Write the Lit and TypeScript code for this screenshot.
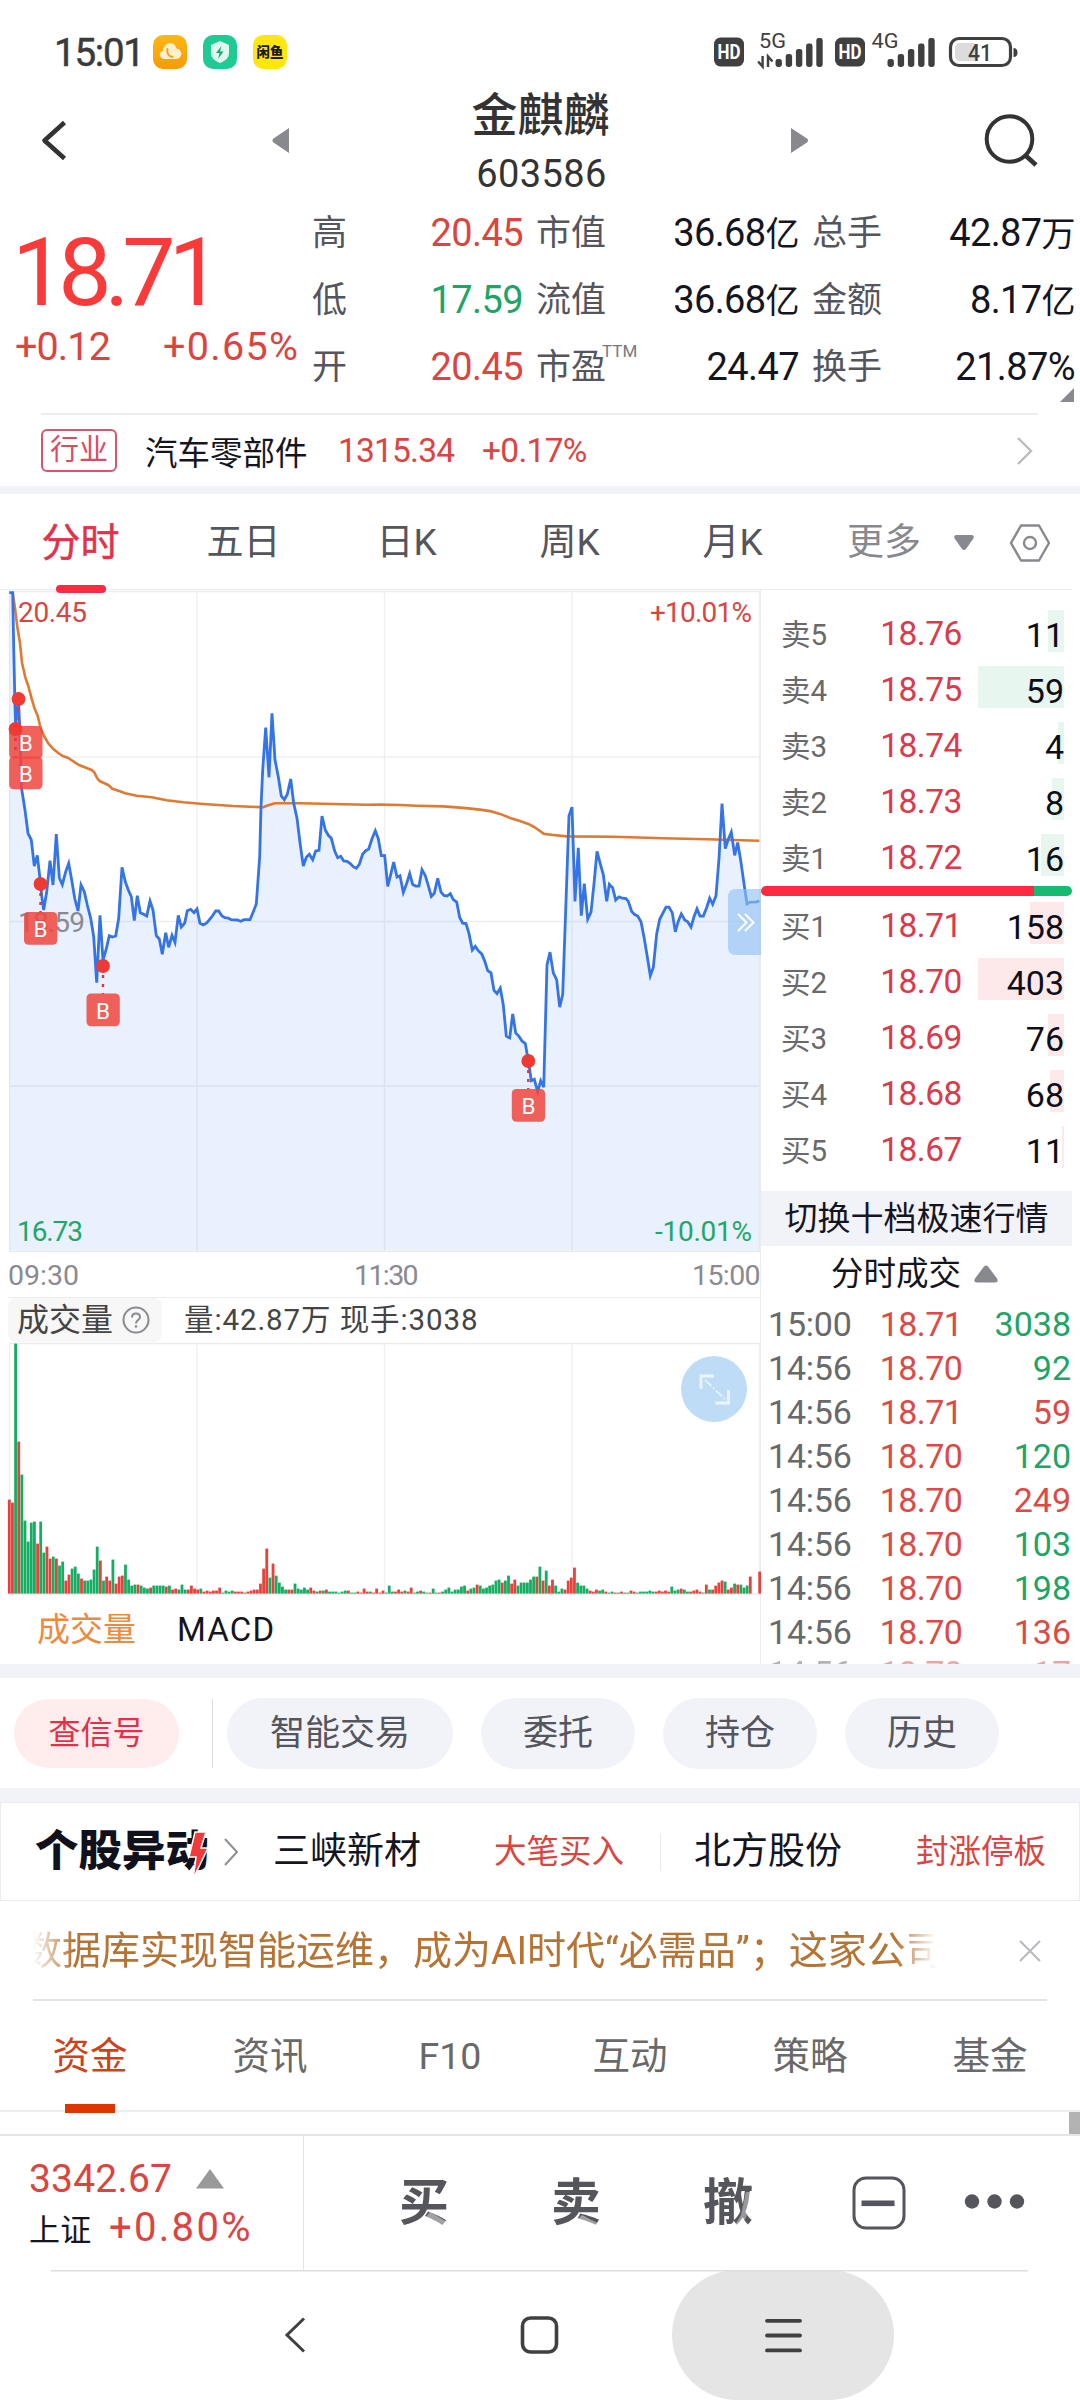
import { LitElement, html, svg, css } from "lit";
import { customElement } from "lit/decorators.js";
import { styleMap } from "lit/directives/style-map.js";

type Pt = [number, number];

/** Reads "x,y x,y ..." samples and maps them onto the page grid. */
const samples = (raw: string, ox: number, oy: number, sx: number, sy: number): Pt[] =>
  raw
    .trim()
    .split(/\s+/)
    .map((p) => {
      const [x, y] = p.split(",").map(Number);
      return [ox + x / sx, oy + y / sy] as Pt;
    });

const toPoints = (pts: Pt[]) => pts.map(([x, y]) => `${x.toFixed(1)},${y.toFixed(1)}`).join(" ");

const PRICE: Pt[] = [
  ...samples(
    `28,38 38,38 41,200 45,380 47,445 50,385 56,375 60,460 64,620 75,690 84,760 94,780 103,858 112,826 121,905 126,955 131,990
     140,935 150,842 159,915 169,762 178,893 187,914 197,875 206,850 215,900 224,955 234,993 243,915 253,935 262,975 272,1015
     281,1070 290,1208 300,1006 309,1140 318,1110 328,1067 337,1071 347,1068 356,1015 366,862 376,905 385,930 394,950 403,1022
     412,947 421,998 431,1003 440,1008 450,963 459,990 469,1067 478,1077 487,1123 497,1058 506,1102 516,1066 525,1087 535,1006
     544,1041 554,1029 562,992 572,988 582,998 591,987 600,1030 610,1035 620,1029 635,1011 647,993 656,993 666,1008 675,1013
     685,1014 693,1019 712,1020 722,1024 732,1019 750,1019 760,995 769,972 779,830 783,680 788,570 797,443 807,592 816,400
     825,540 835,590 844,648 853,659 862,643 872,597 881,670 891,715 901,795 910,858 919,832 928,823 938,839 947,813 957,811
     966,708 976,750 985,766 994,775 1004,813 1013,833 1022,829 1031,843 1041,844 1050,850 1060,860 1069,865 1078,853 1088,822
     1097,812 1106,807 1116,776 1126,752 1135,776 1144,827`,
    0, 580, 3, 3,
  ),
  ...samples(
    `14,772 23,858 32,825 41,790 51,832 60,828 70,875 79,853 89,822 98,853 107,857 117,857 126,811 136,828 145,856 154,886
     163,877 173,835 183,874 192,883 201,885 211,878 220,895 230,902 239,945 248,961 258,962 267,990 277,1036 286,1026
     295,1038 305,1047 314,1067 323,1094 333,1100 342,1149 351,1158 361,1143 370,1190 379,1277 389,1282 398,1215 407,1268
     417,1278 426,1291 436,1298 445,1345 454,1402 463,1398 473,1433 482,1402 491,1420 501,1078 510,1042 520,1100 530,1120
     539,1196 548,1160 558,900 567,660 576,636 585,900 595,750 604,940 613,850 623,950 633,930 642,850 651,760 661,795
     670,825 680,900 688,852 698,862 707,896 717,887 727,891 738,892 745,900 755,928 764,937 773,941 783,957 792,1000
     801,1050 811,1108 820,1085 830,990 839,950 849,932 858,916 867,916 877,932 886,985 895,955 904,935 914,952 923,957
     933,972 942,943 951,921 960,941 970,941 980,917 989,891 998,908 1008,884 1017,780 1026,626 1036,752 1045,726 1054,706
     1064,771 1073,735 1082,785 1092,850 1101,907 1110,902 1130,901 1138,898`,
    380, 580, 3, 2.8,
  ),
];

const AVERAGE: Pt[] = [
  ...samples(
    `38,38 45,85 52,140 60,190 66,248 76,292 85,318 94,352 103,383 113,408 122,445 132,468 145,490 160,507 175,519 188,528
     205,534 235,554 258,563 275,570 283,577 292,595 300,604 325,615 337,626 360,634 376,640 410,647 455,652 500,661
     550,667 610,672 700,678 750,680 790,682 800,677 825,670 900,670 1000,672 1100,674`,
    0, 580, 3, 3,
  ),
  ...samples(
    `0,629 60,630 110,632 190,634 250,638 300,643 335,648 360,655 395,668 420,675 445,683 465,693 492,711 520,714 560,718
     700,719 850,723 980,726 1138,730`,
    380, 580, 3, 2.8,
  ),
];

/** One entry per minute: height in pixels and direction. */
const VOLUME = `94r 91r 250g 152r 119g 73g 52g 71g 72g 50r 72g 41g 47r 35r 37g 35r 28g 32g 13r 19r 25g 27g 20g 15r 13g 13g 14g 24g
 47g 33r 13g 17r 13r 34g 10r 17r 18r 29g 14g 8g 9g 9r 8g 6g 5g 6r 8g 8g 8g 8g 7r 8g 4r 5r 4g 9g 4g 4r 8r 5r 4r 5g 2r 3r 2r 3r 3r
 6r 1g 3g 2g 3g 2r 2r 2r 1g 2r 3r 4r 4r 10r 25r 45r 16g 30r 18g 11g 7g 4g 4r 4r 10g 5g 4g 6g 4g 6r 3r 2g 3r 3g 4r 2g 2g 2g 1g 2g
 3g 3r 1g 1g 2r 1r 5r 2r 2g 1r 5r 1r 3r 1g 8g 2g 2r 4r 2r 3g 2r 6r 1g 2g 3r 2g 1g 1r 5g 1g 1r 2g 4g 6g 2g 4g 4g 7g 8g 3r 5g 6g
 9r 8g 5g 6g 8g 9g 13g 14g 11r 13g 18g 10r 14r 8g 11g 11g 11g 14g 17g 17r 27g 13r 23g 8r 14r 8g 2g 5g 4r 13r 16r 26r 11g 8g 8g
 5g 3r 2r 4r 3g 4g 2r 1g 2g 1r 1g 2r 1g 1g 3r 2r 1g 2g 2g 2g 3g 2g 2r 3r 2r 3r 2r 7g 3g 4g 5r 4g 2g 2r 3r 4r 2r 1g 9r 4g 4r 8r 11r
 13r 12g 4r 6r 10g 9r 9g 6g 8g 17r 0r 0r 22r`
  .trim()
  .split(/\s+/)
  .map((v) => ({ h: parseInt(v, 10), up: v.endsWith("r") }));

const BAR_STEP = 750.4 / (VOLUME.length - 1);

const GRID_X = [9.5, 197, 384.5, 572, 759.5];

const QUOTES = [
  [["高", "20.45", "", "up"], ["市值", "36.68", "亿", ""], ["总手", "42.87", "万", ""]],
  [["低", "17.59", "", "down"], ["流值", "36.68", "亿", ""], ["金额", "8.17", "亿", ""]],
  [["开", "20.45", "", "up"], ["市盈", "24.47", "", ""], ["换手", "21.87%", "", ""]],
];

const ASKS: [string, string, string, number][] = [
  ["卖5", "18.76", "11", 16],
  ["卖4", "18.75", "59", 86],
  ["卖3", "18.74", "4", 6],
  ["卖2", "18.73", "8", 12],
  ["卖1", "18.72", "16", 23],
];
const BIDS: [string, string, string, number][] = [
  ["买1", "18.71", "158", 34],
  ["买2", "18.70", "403", 86],
  ["买3", "18.69", "76", 16],
  ["买4", "18.68", "68", 14],
  ["买5", "18.67", "11", 2],
];
const TRADES = [
  ["15:00", "18.71", "3038", "down"],
  ["14:56", "18.70", "92", "down"],
  ["14:56", "18.71", "59", "up"],
  ["14:56", "18.70", "120", "down"],
  ["14:56", "18.70", "249", "up"],
  ["14:56", "18.70", "103", "down"],
  ["14:56", "18.70", "198", "down"],
  ["14:56", "18.70", "136", "up"],
  ["14:56", "18.70", "17", "up"],
];

const FONT = css`Roboto, "Noto Sans CJK SC", "Liberation Sans", sans-serif`;

@customElement("status-bar")
class StatusBar extends LitElement {
  static styles = css`
    :host { display: block; height: 80px; }
    svg { display: block; }
    text { font-family: ${FONT}; }
  `;

  private bars(x: number) {
    return [8, 13, 18, 23.5, 29].map(
      (h, i) => svg`<rect x=${x + i * 10.2} y=${67 - h} width="6.4" height=${h} rx="2.4" fill="#404040"/>`,
    );
  }

  private hd(x: number) {
    return svg`
      <rect x=${x} y="37.5" width="30" height="29" rx="6.5" fill="#404040"/>
      <text x=${x + 3.5} y="59" font-size="19.5" font-weight="700" fill="#fff" textLength="23" lengthAdjust="spacingAndGlyphs">HD</text>`;
  }

  render() {
    return html`<svg width="1080" height="80" viewBox="0 0 1080 80">
      <defs>
        <linearGradient id="orange" x1="0" y1="0" x2="0" y2="1">
          <stop offset="0" stop-color="#fdb813" /><stop offset="1" stop-color="#f79a05" />
        </linearGradient>
      </defs>
      <text x="54" y="66" font-size="38.500" fill="#3a3a3a" stroke="#3a3a3a" stroke-width=".5" textLength="91">15:01</text>
      <rect x="153" y="35" width="34" height="34" rx="10" fill="url(#orange)" />
      <path d="M164.500 59c-6-1-6-7-1.500-8 .5-9.500 12-10 13.500-2.500 7 1.500 6 10 0 10.500z" fill="#fdf1cd" />
      <path d="M167.500 49c-1 4 1 7.500 5 8" fill="none" stroke="#f3a31a" stroke-width="2" stroke-linecap="round" />
      <rect x="203" y="35" width="34" height="34" rx="10" fill="#1fcb94" />
      <path d="M220 41l9 4v8c0 5-4 8-9 10-5-2-9-5-9-10v-8z" fill="#dff8ef" />
      <path d="M221.500 46l-5.500 7h3.500l-1.500 6 5.500-7.500h-3.500z" fill="#15a877" />
      <rect x="253" y="35" width="34" height="34" rx="10" fill="#ffe60f" />
      <text x="256.500" y="57" font-size="14" font-weight="900" fill="#1b1a10" textLength="27" lengthAdjust="spacingAndGlyphs">闲鱼</text>
      ${this.hd(714)}
      <text x="759" y="47.500" font-size="19.500" fill="#404040" textLength="27" lengthAdjust="spacingAndGlyphs">5G</text>
      <path d="M762.600 56v10.500l-4.500-5M768 67v-10.500l4.500 5" fill="none" stroke="#404040" stroke-width="2.400" />
      ${this.bars(775.5)} ${this.hd(835)}
      <text x="871.500" y="47.500" font-size="19.500" fill="#404040" textLength="27" lengthAdjust="spacingAndGlyphs">4G</text>
      ${this.bars(887.5)}
      <rect x="950.500" y="38.500" width="60" height="27" rx="8.500" fill="#fff" stroke="#404040" stroke-width="3.200" />
      <path d="M960 43h15v18h-15q-5 0-5-5v-8q0-5 5-5z" fill="#dcdcdc" />
      <path d="M1013.500 48q4 0 4 4.500t-4 4.500z" fill="#404040" />
      <text x="968" y="61" font-size="24.500" fill="#404040" font-weight="500" textLength="24" lengthAdjust="spacingAndGlyphs">41</text>
    </svg>`;
  }
}

@customElement("price-chart")
class PriceChart extends LitElement {
  static styles = css`
    :host { display: block; }
    svg { display: block; }
    text { font-family: ${FONT}; }
  `;

  private marker(dx: number, dy: number, bx: number, by: number) {
    return svg`
      <line x1=${dx} y1=${dy} x2=${dx} y2=${Math.max(by, dy + 28)} stroke="#d9363e" stroke-width="2.4" stroke-dasharray="3 6"/>
      <rect x=${bx} y=${by} width="33.3" height="32.8" rx="4.5" fill="#f0483f" fill-opacity=".86"/>
      <circle cx=${dx} cy=${dy} r="6.9" fill="#ee3a33"/>
      <text x=${bx + 16.6} y=${by + 25} text-anchor="middle" font-size="22.5" fill="#fff">B</text>`;
  }

  render() {
    const line = toPoints(PRICE);
    return html`<svg width="761" height="663" viewBox="0 590 761 663">
      ${[757, 921.5, 1086].map((y) => svg`<line x1="9" x2="760" y1=${y} y2=${y} stroke="#efeff1" stroke-width="1.4"/>`)}
      ${GRID_X.map((x) => svg`<line x1=${x} x2=${x} y1="591" y2="1251" stroke="#efeff1" stroke-width="1.4"/>`)}
      <line x1="9" x2="760" y1="591.500" y2="591.500" stroke="#ececee" stroke-width="1.600" />
      <polygon points="9.500,1250 ${line} 759.500,1250" fill="#2f76f5" fill-opacity=".105" />
      <line x1="9" x2="760" y1="1251.300" y2="1251.300" stroke="#e8eaee" stroke-width="1.600" />
      <text x="18" y="932" font-size="28" fill="#8a8a90" textLength="67">18.59</text>
      <polyline points=${toPoints(AVERAGE)} fill="none" stroke="#de7a32" stroke-width="2.600" stroke-linejoin="round" />
      <polyline points=${line} fill="none" stroke="#3474e6" stroke-width="2.800" stroke-linejoin="miter" />
      <text x="18" y="622" font-size="28" fill="#d9463f" textLength="69">20.45</text>
      <text x="650" y="622" font-size="28" fill="#d9463f" textLength="102">+10.01%</text>
      <text x="17" y="1241" font-size="28" fill="#1fa865" textLength="66">16.73</text>
      <text x="655" y="1241" font-size="28" fill="#1fa865" textLength="97">-10.01%</text>
      ${this.marker(18.5, 699, 9.2, 726)} ${this.marker(15.5, 729, 9.2, 756.5)} ${this.marker(40.5, 884, 24, 912)}
      ${this.marker(103, 966, 86.5, 993.5)} ${this.marker(528.3, 1061, 511.8, 1089)}
      <path d="M761 889h-25q-8 0-8 8v50q0 8 8 8h25z" fill="#8fc2f2" fill-opacity=".62" />
      <path d="M738 914l8.500 8.500-8.500 8.500M745 914l8.500 8.500-8.500 8.500" fill="none" stroke="#fff" stroke-width="2" />
    </svg>`;
  }
}

@customElement("volume-chart")
class VolumeChart extends LitElement {
  static styles = css`
    :host { display: block; }
    svg { display: block; }
  `;

  render() {
    return html`<svg width="761" height="254" viewBox="0 1342 761 254">
      ${GRID_X.map((x) => svg`<line x1=${x} x2=${x} y1="1343" y2="1594" stroke="#efeff1" stroke-width="1.4"/>`)}
      <line x1="9" x2="760" y1="1343.500" y2="1343.500" stroke="#ececee" stroke-width="1.600" />
      <line x1="9" x2="760" y1="1594" y2="1594" stroke="#ececee" stroke-width="1.400" />
      ${VOLUME.map(
        ({ h, up }, i) => svg`<rect x=${(7.9 + i * BAR_STEP).toFixed(2)} y=${1593.6 - h} width="2.8" height=${h}
          fill=${up ? "#e8413c" : "#15ad62"}/>`,
      )}
      <circle cx="714" cy="1389" r="33" fill="#bfdcf6" />
      <path d="M701 1389v-13h13M715.500 1403h13v-13" fill="none" stroke="#e9f5ff" stroke-width="2.800" />
      <path d="M705 1380l20 19" stroke="#e9f5ff" stroke-width="1.600" stroke-dasharray="9 2 2 2" />
    </svg>`;
  }
}

@customElement("order-book")
class OrderBook extends LitElement {
  static styles = css`
    :host { display: block; width: 311px; height: 1074px; overflow: hidden; font-family: ${FONT}; }
    .asks { padding-top: 13px; }
    .level { display: grid; grid-template-columns: 100px 120px 82px; height: 56px; align-items: center; line-height: 42px; }
    .name { padding-left: 20px; font-size: 29.500px; color: #696969; padding-top: 7px; }
    .price { text-align: center; font-size: 33.500px; color: #dc3a4a; padding-top: 6px; letter-spacing: -0.500px; }
    .qty { position: relative; height: 42px; text-align: right; font-size: 34px; color: #0e0e18; }
    .depth { position: absolute; right: -1px; top: 0; height: 42px; }
    .asks .depth { background: #e7f6ee; }
    .bids .depth { background: #fee9ea; }
    .num { position: relative; display: block; padding-top: 4px; margin-right: -1px; }
    .ratio { display: flex; height: 10px; margin-top: 3px; border-radius: 5px; overflow: hidden; }
    .buy { width: 273px; background: #fd2a41; }
    .sell { flex: 1; background: #17ba70; }
    .bids { margin-top: -1px; }
    .switch { margin-top: 16px; height: 55px; line-height: 55px; background: #f1f3f8; text-align: center; font-size: 33px; color: #15151f; }
    .head { display: flex; height: 56px; align-items: center; font-size: 32.500px; color: #15151f; padding-left: 70px; gap: 12px; line-height: 54px; }
    .trade { display: grid; grid-template-columns: 100px 120px 90px; height: 44px; line-height: 44px; font-size: 34px; }
    .trade:last-child { opacity: 0.500; margin-top: -3px; }
    .time { padding-left: 7px; color: #696969; letter-spacing: -0.200px; }
    .deal { text-align: center; color: #dc4a46; letter-spacing: -0.600px; }
    .vol { text-align: right; }
    .up { color: #dc4a46; }
    .down { color: #1ea566; }
  `;

  private level([name, price, qty, w]: [string, string, string, number]) {
    return html`<div class="level">
      <span class="name">${name}</span><span class="price">${price}</span>
      <span class="qty"><i class="depth" style=${styleMap({ width: `${w}px` })}></i><span class="num">${qty}</span></span>
    </div>`;
  }

  render() {
    return html`
      <div class="asks">${ASKS.map((l) => this.level(l))}</div>
      <div class="ratio"><span class="buy"></span><span class="sell"></span></div>
      <div class="bids">${BIDS.map((l) => this.level(l))}</div>
      <div class="switch">切换十档极速行情</div>
      <div class="head">
        分时成交
        <svg width="26" height="20" viewBox="0 0 26 20"><path d="M11 2.500q2-2 4 0l9 12q2 4-2 4h-18q-4 0-2-4z" fill="#88888f" /></svg>
      </div>
      ${TRADES.map(
        ([t, p, v, dir]) => html`<div class="trade">
          <span class="time">${t}</span><span class="deal">${p}</span><span class="vol ${dir}">${v}</span>
        </div>`,
      )}
    `;
  }
}

@customElement("app-root")
class AppRoot extends LitElement {
  static styles = css`
    :host { display: block; width: 1080px; height: 2400px; overflow: hidden; background: #fff; font-family: ${FONT}; color: #15151f; }
    * { box-sizing: border-box; }
    svg { display: block; flex: none; }
    .up { color: #dc4440; }
    .down { color: #1ea566; }
    .band { height: 14px; background: #f1f3f8; }
    .band.slim { height: 8px; }

    .header { display: grid; grid-template-columns: 272px 1fr 271px; height: 119px; }
    .side { display: flex; align-items: flex-start; }
    .title { text-align: center; color: #333; }
    .name { padding-top: 5px; font-size: 46px; line-height: 60px; font-weight: 500; }
    .code { font-size: 38px; line-height: 59px; letter-spacing: 0.400px; padding-left: 2px; }
    .mid { display: grid; grid-template-columns: 18px 1fr 18px; }
    .tri { margin-top: 48px; }

    .quote { display: grid; grid-template-columns: 313px 1fr; height: 214px; }
    .last { padding: 24px 0 0 12px; }
    .big { font-size: 95px; line-height: 99px; letter-spacing: -7.200px; color: #f93a3a; }
    .chg { display: flex; font-size: 39.500px; line-height: 50px; padding-left: 3px; white-space: nowrap; }
    .amt { width: 148px; letter-spacing: -0.900px; }
    .pct { letter-spacing: 1.300px; }
    .qrow { display: grid; grid-template-columns: 210px 262px 262px; column-gap: 14px; height: 67px; line-height: 69px; }
    .cell { display: flex; justify-content: space-between; }
    .lab { font-size: 35px; color: #55555d; position: relative; left: -1px; }
    .ttm { font-size: 17px; position: absolute; left: 66px; top: -16px; color: #77777d; }
    .val { font-size: 38px; letter-spacing: -0.600px; }
    .unit { font-size: 34px; }
    .more { display: flex; justify-content: flex-end; padding: 0 6px 0 0; margin-top: -12px; }

    .industry { display: flex; align-items: center; height: 73px; margin: 0 42px 0 41px; border-top: 2px solid #ededef; font-size: 33.500px; }
    .tag { width: 76px; height: 43px; border: 2px solid #d9556e; border-radius: 6px; color: #dc4a64; font-size: 29px; line-height: 39px; text-align: center; }
    .sector { margin-left: 28px; font-size: 32.500px; width: 193px; }
    .idx { width: 144px; letter-spacing: -0.800px; }
    .gain { letter-spacing: -0.700px; }
    .grow { flex: 1; }

    .tabs { display: grid; grid-template-columns: repeat(5, 163px) 1fr; height: 96px; border-bottom: 1px solid #ececee; margin-right: 8px; }
    .tab { position: relative; text-align: center; font-size: 37px; line-height: 98px; color: #55555d; padding-right: 2px; }
    .tab.on { color: #e0324a; font-size: 39px; -webkit-text-stroke: 0.500px #e0324a; }
    .tab.on::after { content: ""; position: absolute; left: 56px; bottom: -1px; width: 50px; height: 8px; border-radius: 4px; background: #fd2a41; }
    .extra { display: flex; align-items: center; padding-left: 32px; color: #88888f; font-size: 37px; line-height: 96px; }
    .caret { margin-left: 33px; }
    .gear { margin-left: 35px; }

    .main { display: grid; grid-template-columns: 761px 1fr; height: 1074px; overflow: hidden; }
    .left { border-right: 1px solid #ececee; }
    .axis { display: flex; justify-content: space-between; height: 45px; line-height: 46px; font-size: 28.500px; color: #8a8a90; margin: 0 0 0 8px; border-bottom: 1px solid #ececee; }
    .t2 { letter-spacing: -1.600px; }
    .t3 { letter-spacing: -0.600px; }
    .volhead { display: flex; height: 44px; padding-left: 8px; align-items: center; color: #444; }
    .pick { display: flex; align-items: center; gap: 9px; width: 154px; height: 44px; background: #f7f7f7; border-radius: 8px; padding-left: 9px; font-size: 32px; white-space: nowrap; line-height: 44px; }
    .volinfo { padding-left: 22px; font-size: 29.500px; letter-spacing: 0.900px; line-height: 44px; white-space: nowrap; }
    .legend { display: flex; height: 68px; line-height: 68px; padding-left: 37px; gap: 41px; font-size: 33px; }
    .sel { color: #ee8a3e; }
    .macd { letter-spacing: 1.200px; }

    .pills { display: flex; align-items: center; height: 110px; padding-left: 14px; }
    .pill { height: 71px; line-height: 71px; border-radius: 36px; background: #f1f3f8; text-align: center; color: #55555d; font-size: 35px; width: 154px; margin-right: 28px; }
    .pill.wide { width: 226px; }
    .pill.sig { width: 165px; height: 69px; line-height: 69px; background: #ffeded; color: #e52f49; font-size: 32px; margin-right: 33px; }
    .vr { width: 1px; background: #dcdcdf; }
    .vr.p { height: 69px; margin-right: 14px; }

    .movers { display: flex; align-items: center; height: 99px; border: 1px solid #ececee; padding: 1px 0 0 34px; white-space: nowrap; font-size: 37px; line-height: 60px; }
    .logo { position: relative; font-size: 43.500px; font-weight: 900; width: 188px; color: #11111b; }
    .bolt { position: absolute; left: 151px; top: 8px; }
    .stock { width: 148px; }
    .hit { font-size: 32.500px; color: #dc4440; }
    .s1 { margin-left: 33px; }
    .h1 { margin-left: 73px; margin-right: 36px; }
    .vr.m { height: 37px; background: #ebebee; margin-right: 33px; }
    .h2 { margin-left: 74px; }

    .notice { display: flex; align-items: center; height: 100px; margin: 0 33px; border-bottom: 2px solid #e4e4e6; }
    .ticker { width: 903px; overflow: hidden; white-space: nowrap; font-size: 39px; line-height: 92px; padding-top: 2px; color: #b67334;
      -webkit-mask-image: linear-gradient(90deg, transparent 0, #000 40px, #000 862px, transparent 903px);
      mask-image: linear-gradient(90deg, transparent 0, #000 40px, #000 862px, transparent 903px); }
    .run { display: block; margin-left: -10px; }
    .close { margin-left: 82px; margin-top: 2px; }

    .nav6 { display: grid; grid-template-columns: repeat(6, 180px); height: 111px; border-bottom: 2px solid #ededef; }
    .item { position: relative; text-align: center; font-size: 37.500px; line-height: 111px; color: #696969; }
    .item.on { color: #cf4118; }
    .item.on::after { content: ""; position: absolute; left: 65px; bottom: -1px; width: 50px; height: 9px; background: #dd3602; }
    .peek { display: flex; justify-content: flex-end; height: 22px; }
    .thumb { width: 11px; background: #b3b3b3; }

    .bar { display: grid; grid-template-columns: 304px 1fr; height: 136px; border-top: 2px solid #e6e6e8; }
    .index { border-right: 1px solid #e6e6e8; padding: 18px 0 0 29px; }
    .line { display: flex; align-items: center; height: 49px; font-size: 39px; color: #dc4440; letter-spacing: 0.200px; white-space: nowrap; }
    .spot { margin-left: 24px; }
    .sh { font-size: 31px; color: #15151f; width: 80px; }
    .p { font-size: 40px; letter-spacing: 2.300px; }
    .acts { display: flex; align-items: center; padding: 0 0 0 95px; }
    .act { position: relative; width: 152px; font-size: 50px; font-weight: 700; color: #55555c; line-height: 70px; }
    .act.wd { width: 149px; }
    .fade { position: absolute; left: 0; top: 10px; }

    .sys { height: 130px; }
    .sys svg { width: 1080px; height: 130px; }
  `;

  render() {
    return html`
      <status-bar></status-bar>
      <div class="header">
        <div class="side">
          <svg width="80" height="119" viewBox="0 80 80 119"><path d="M64.500 122.500L44.500 140.500L64.500 158.500" fill="none" stroke="#333" stroke-width="4.600" stroke-linejoin="round" /></svg>
        </div>
        <div class="mid">
          <svg class="tri" width="18" height="26"><path d="M17 0v25l-15.500-10.500q-2-2 0-4z" fill="#88888f" /></svg>
          <div class="title">
            <div class="name">金麒麟</div>
            <div class="code">603586</div>
          </div>
          <svg class="tri" width="18" height="26"><path d="M0 0v25l16-10.500q2-2 0-4z" fill="#88888f" /></svg>
        </div>
        <div class="side">
          <svg width="271" height="119" viewBox="809 80 271 119">
            <circle cx="1009.500" cy="139" r="22.800" fill="none" stroke="#333" stroke-width="4" />
            <path d="M1025 155l11 10" stroke="#333" stroke-width="4.600" />
          </svg>
        </div>
      </div>

      <div class="quote">
        <div class="last">
          <div class="big">18.71</div>
          <div class="chg up"><span class="amt">+0.12</span><span class="pct">+0.65%</span></div>
        </div>
        <div>
          ${QUOTES.map(
            (row) => html`<div class="qrow">
              ${row.map(
                ([l, v, u, dir]) => html`<div class="cell">
                  <span class="lab">${l}${l === "市盈" ? html`<span class="ttm">TTM</span>` : ""}</span>
                  <span class="val ${dir}">${v}<span class="unit">${u}</span></span>
                </div>`,
              )}
            </div>`,
          )}
          <div class="more"><svg width="14" height="14"><path d="M14 0v14h-14z" fill="#88888f" /></svg></div>
        </div>
      </div>

      <div class="industry">
        <span class="tag">行业</span>
        <span class="sector">汽车零部件</span>
        <span class="idx up">1315.34</span><span class="gain up">+0.17%</span>
        <span class="grow"></span>
        <svg width="22" height="30"><path d="M2 2l13 13-13 13" fill="none" stroke="#bcbcc0" stroke-width="2.400" /></svg>
      </div>
      <div class="band slim"></div>

      <div class="tabs">
        <span class="tab on">分时</span><span class="tab">五日</span><span class="tab">日K</span>
        <span class="tab">周K</span><span class="tab">月K</span>
        <span class="extra">更多
          <svg class="caret" width="20" height="18"><path d="M2 1h16q3 1 1 4l-7 10q-2 2-4 0l-7-10q-2-3 1-4z" fill="#88888f" /></svg>
          <svg class="gear" width="42" height="40" viewBox="0 0 42 40">
            <path d="M12 2.500h18l10 17.500-10 17.500h-18l-10-17.500z" fill="none" stroke="#88888f" stroke-width="2.400" stroke-linejoin="round" />
            <circle cx="21" cy="20" r="6" fill="none" stroke="#88888f" stroke-width="2.400" />
          </svg>
        </span>
      </div>

      <div class="main">
        <div class="left">
          <price-chart></price-chart>
          <div class="axis"><span>09:30</span><span class="t2">11:30</span><span class="t3">15:00</span></div>
          <div class="volhead">
            <span class="pick">成交量
              <svg width="28" height="28"><circle cx="14" cy="14" r="12.500" fill="none" stroke="#8a8a90" stroke-width="2" />
                <path d="M10 11.500q0-4 4-4t4 3.500q0 2-2.300 3.300-1.700 1-1.700 3.200" fill="none" stroke="#8a8a90" stroke-width="2" /><circle cx="14" cy="20.500" r="1.300" fill="#8a8a90" /></svg>
            </span>
            <span class="volinfo">量:42.87万 现手:3038</span>
          </div>
          <volume-chart></volume-chart>
          <div class="legend"><span class="sel">成交量</span><span class="macd">MACD</span></div>
        </div>
        <order-book></order-book>
      </div>

      <div class="band"></div>
      <div class="pills">
        <span class="pill sig">查信号</span><span class="vr p"></span>
        <span class="pill wide">智能交易</span><span class="pill">委托</span><span class="pill">持仓</span><span class="pill">历史</span>
      </div>
      <div class="band"></div>

      <div class="movers">
        <span class="logo">个股异动
          <svg class="bolt" width="22" height="52"><path d="M9 2h11l-5 16h7l-15 31 3-22h-7z" fill="#f23a3a" stroke="#fff" stroke-width="1.500" /></svg>
        </span>
        <svg width="17" height="30"><path d="M2 2l12 13-12 13" fill="none" stroke="#8e8e94" stroke-width="2" /></svg>
        <span class="stock s1">三峡新材</span><span class="hit h1">大笔买入</span>
        <span class="vr m"></span>
        <span class="stock">北方股份</span><span class="hit h2">封涨停板</span>
      </div>

      <div class="notice">
        <div class="ticker"><span class="run">数据库实现智能运维，成为AI时代“必需品”；这家公司</span></div>
        <svg class="close" width="24" height="24"><path d="M2 2l20 20M22 2l-20 20" stroke="#b9b9bd" stroke-width="2" /></svg>
      </div>

      <div class="nav6">
        <span class="item on">资金</span><span class="item">资讯</span><span class="item">F10</span>
        <span class="item">互动</span><span class="item">策略</span><span class="item">基金</span>
      </div>
      <div class="peek"><span class="thumb"></span></div>

      <div class="bar">
        <div class="index">
          <div class="line">3342.67
            <svg class="spot" width="28" height="20"><path d="M14 0l14 19.500h-28z" fill="#999" /></svg>
          </div>
          <div class="line"><span class="sh">上证</span><span class="p">+0.80%</span></div>
        </div>
        <div class="acts">
          <span class="act">买<svg class="fade" width="50" height="50"><path d="M26 40l5-6 19 11v6h-6z" fill="#fff" fill-opacity=".45" /></svg></span>
          <span class="act">卖<svg class="fade" width="50" height="50"><path d="M26 42l5-5 19 10v6h-6z" fill="#fff" fill-opacity=".45" /></svg></span>
          <span class="act wd">撤<svg class="fade" width="50" height="52"><path d="M43 14h5l-5 26-11 12h-3l9-15z" fill="#fff" fill-opacity=".4" /></svg></span>
          <svg width="176" height="54" viewBox="852 2175 176 54">
            <rect x="854" y="2177" width="50" height="50" rx="12" fill="none" stroke="#55555c" stroke-width="3" />
            <rect x="861.500" y="2199.500" width="33" height="5.600" fill="#55555c" />
            <circle cx="972" cy="2200.500" r="7.200" fill="#55555c" /><circle cx="994.500" cy="2200.500" r="7.200" fill="#55555c" /><circle cx="1017" cy="2200.500" r="7.200" fill="#55555c" />
          </svg>
        </div>
      </div>

      <div class="sys">
        <svg viewBox="0 2270 1080 130">
          <rect x="672" y="2270" width="222" height="130" rx="65" fill="#e5e5e5" />
          <line x1="51" x2="1028" y1="2270.500" y2="2270.500" stroke="#dedee0" stroke-width="2" />
          <path d="M304 2318.500l-17 16.500 17 16.500" fill="none" stroke="#404040" stroke-width="3" />
          <rect x="522.500" y="2318" width="34" height="34" rx="8" fill="none" stroke="#404040" stroke-width="3.600" />
          <path d="M767 2320.800h33M767 2335.500h33M767 2350.400h33" stroke="#404040" stroke-width="3.800" stroke-linecap="round" />
        </svg>
      </div>
    `;
  }
}
